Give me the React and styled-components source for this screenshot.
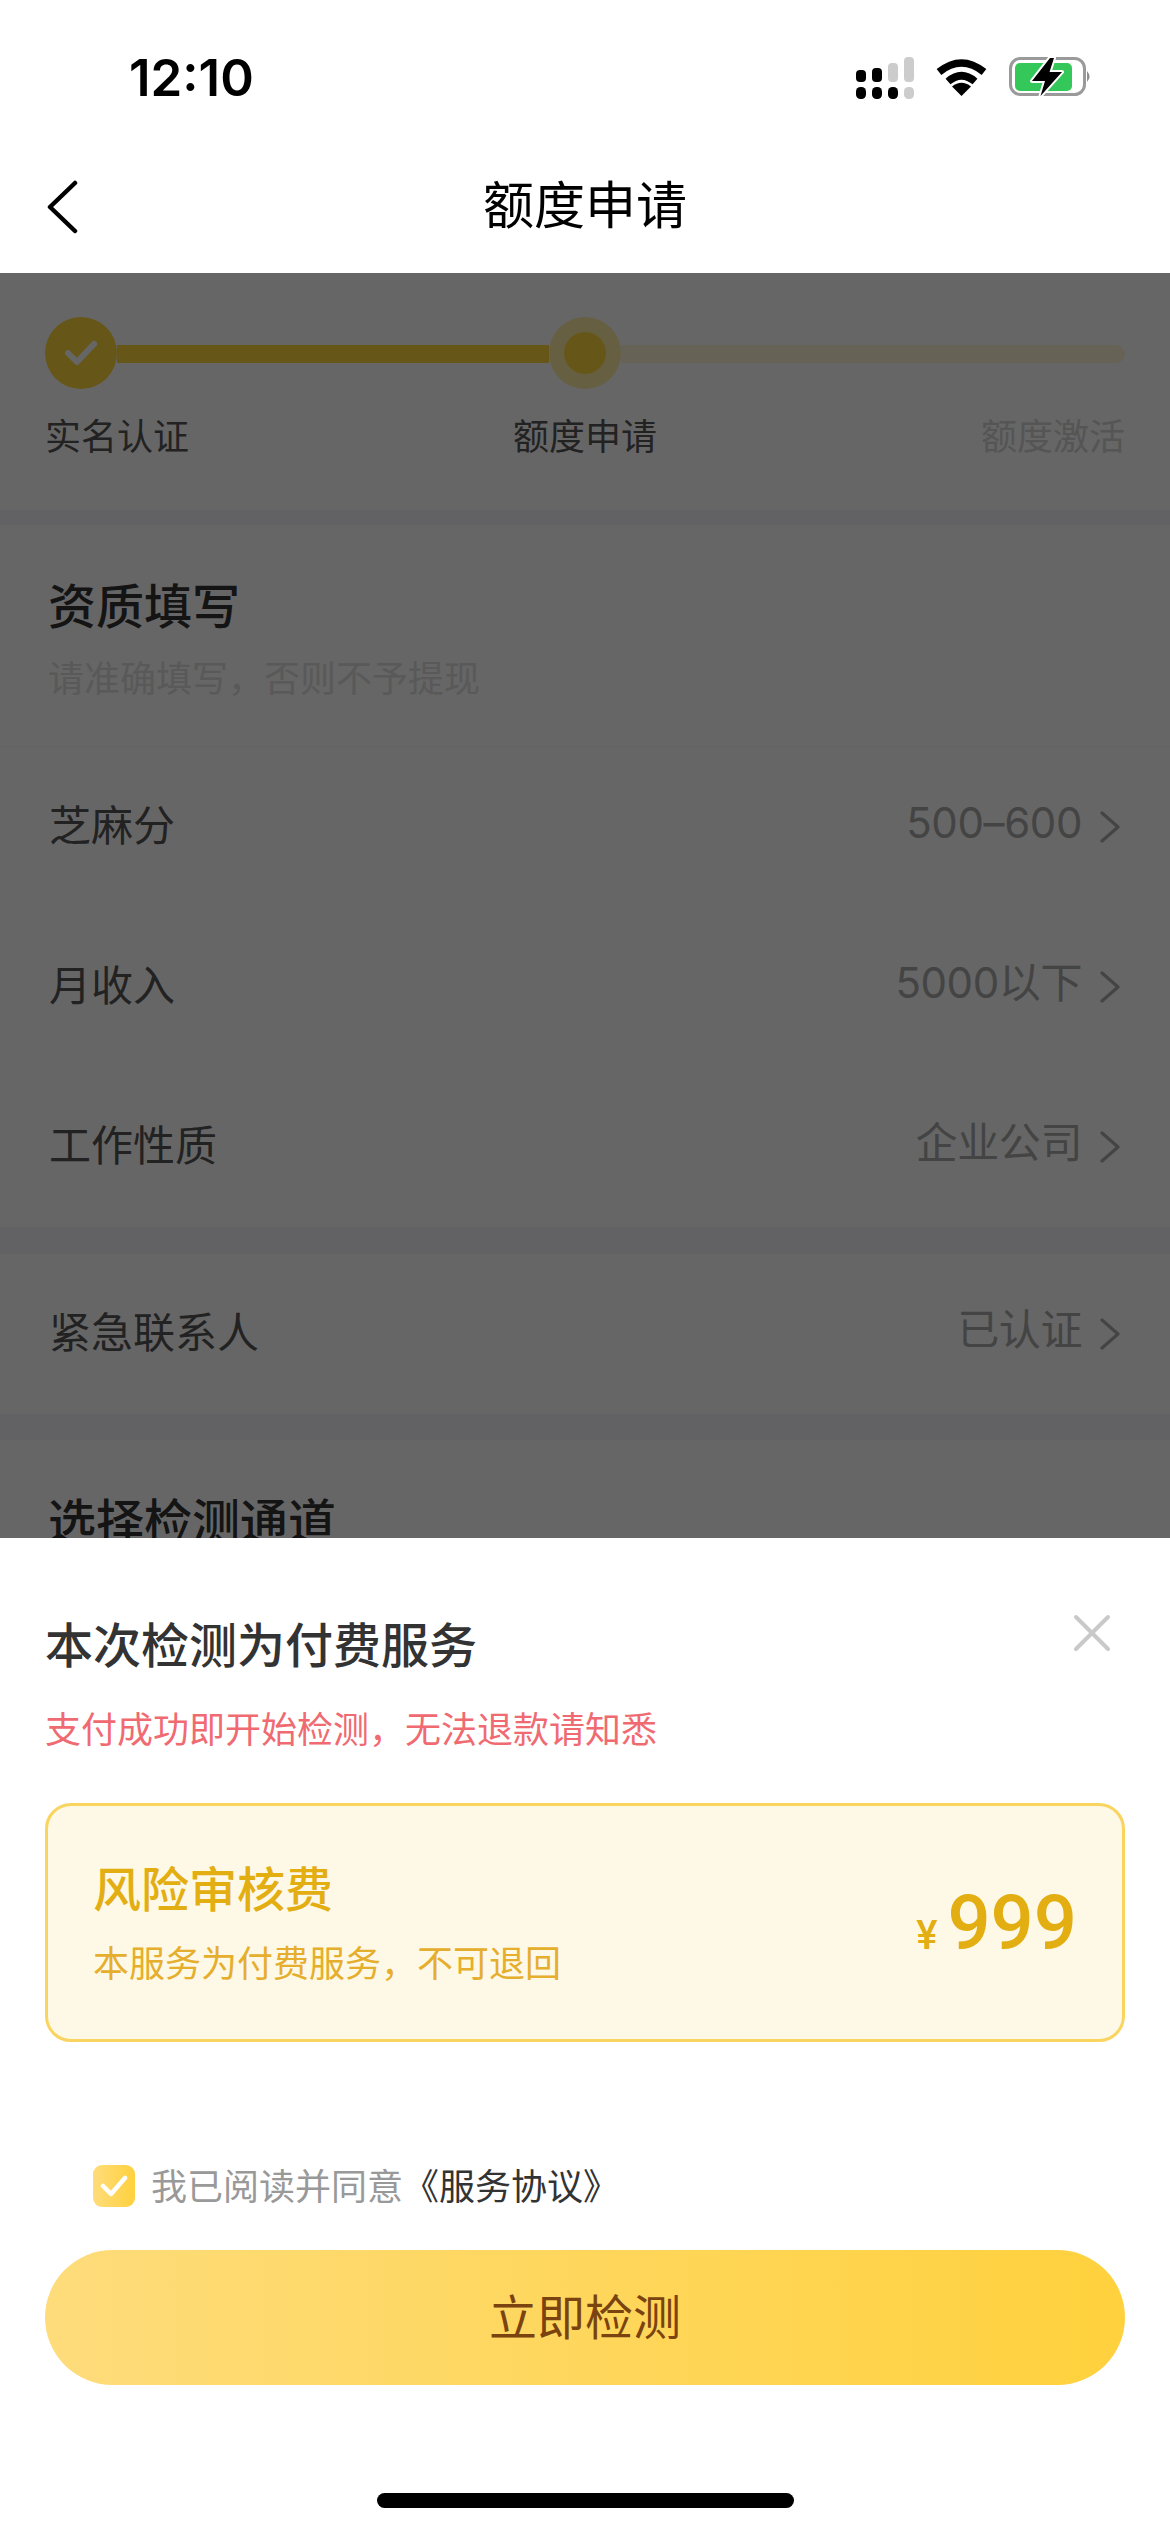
import React from "react";
import styled, { createGlobalStyle } from "styled-components";

const FONT = `"Noto Sans CJK SC", "Liberation Sans", sans-serif`;

const GlobalStyle = createGlobalStyle`
  html, body {
    margin: 0;
    padding: 0;
    background: #fff;
  }
  * {
    box-sizing: border-box;
  }
`;

const Screen = styled.div`
  position: relative;
  width: 1170px;
  height: 2532px;
  overflow: hidden;
  background: #fff;
  font-family: ${FONT};
`;

const StatusBar = styled.div`
  height: 136px;
  padding: 57px 78px 0 129px;
  display: flex;
  justify-content: space-between;
  align-items: flex-start;
`;

const Time = styled.div`
  font-family: Inter, "Liberation Sans", sans-serif;
  font-size: 51px;
  font-weight: 600;
  line-height: 42px;
  color: #000;
`;

const StatusIcons = styled.div`
  display: flex;
  align-items: flex-start;
  gap: 22px;
`;

const NavBar = styled.div`
  position: relative;
  height: 137px;
  padding-bottom: 5px;
  display: flex;
  align-items: center;
  justify-content: center;
`;

const BackIcon = styled.svg`
  position: absolute;
  left: 46px;
  top: 44px;
`;

const NavTitle = styled.div`
  font-size: 51px;
  line-height: 60px;
  color: #000;
`;

const Stepper = styled.section`
  height: 237px;
  padding: 44px 45px 0;
  background: #fff;
`;

const Track = styled.div`
  display: flex;
  align-items: center;
`;

const DoneDot = styled.div`
  width: 72px;
  height: 72px;
  flex: none;
  border-radius: 50%;
  background: #ffd83c;
  display: flex;
  align-items: center;
  justify-content: center;
`;

const CurrentDot = styled.div`
  width: 72px;
  height: 72px;
  flex: none;
  border-radius: 50%;
  background: #ffeea6;
  display: flex;
  align-items: center;
  justify-content: center;

  &::after {
    content: "";
    width: 42px;
    height: 42px;
    border-radius: 50%;
    background: #ffd83c;
  }
`;

const Line = styled.div`
  height: 18px;
  margin-top: 2px;
  flex: ${(p) => (p.$done ? "0 0 432px" : "1")};
  background: ${(p) => (p.$done ? "#ffd83c" : "#fff5d6")};
  border-radius: ${(p) => (p.$done ? "0" : "0 9px 9px 0")};
`;

const StepLabels = styled.div`
  margin-top: 20px;
  display: flex;
  justify-content: space-between;
`;

const StepLabel = styled.span`
  font-size: 36px;
  line-height: 50px;
  color: ${(p) => (p.$muted ? "#d4d4d4" : "#555")};
`;

const Band = styled.div`
  height: ${(p) => p.$size}px;
  background: #f6f6fa;
`;

const Section = styled.section`
  padding: 48px 48px 45px;
  background: #fff;
`;

const SectionTitle = styled.h2`
  margin: 0;
  font-size: 48px;
  font-weight: 500;
  line-height: 60px;
  color: #333;
`;

const SectionHint = styled.p`
  margin: 18px 0 0;
  font-size: 36px;
  line-height: 50px;
  color: #dedede;
`;

const Row = styled.div`
  height: 160px;
  padding: 0 50px 8px 49px;
  display: flex;
  align-items: center;
  justify-content: space-between;
  background: #fff;
`;

const RowLabel = styled.span`
  font-size: 42px;
  line-height: 60px;
  color: #555;
`;

const RowValue = styled.span`
  display: flex;
  align-items: center;
  gap: 18px;
  font-family: Inter, ${FONT};
  font-size: 42px;
  line-height: 60px;
  letter-spacing: -0.4px;
  color: #aaa;
`;

const ChevronIcon = styled.svg`
  margin-top: 8px;
`;

const Overlay = styled.div`
  position: absolute;
  top: 273px;
  left: 0;
  right: 0;
  bottom: 0;
  background: rgba(0, 0, 0, 0.6);
`;

const Sheet = styled.div`
  position: absolute;
  left: 0;
  right: 0;
  bottom: 0;
  height: 994px;
  padding: 74px 45px 0;
  background: #fff;
`;

const CloseIcon = styled.svg`
  position: absolute;
  top: 76px;
  right: 59px;
`;

const SheetTitle = styled.h3`
  margin: 0;
  font-size: 48px;
  font-weight: 500;
  line-height: 60px;
  color: #333;
`;

const SheetNote = styled.p`
  margin: 30px 0 0;
  font-size: 36px;
  line-height: 50px;
  color: #f06a72;
`;

const PriceCard = styled.div`
  margin-top: 51px;
  height: 239px;
  padding: 0 45px;
  display: flex;
  align-items: center;
  justify-content: space-between;
  background: #fef9e7;
  border: 3px solid #f9d45f;
  border-radius: 26px;
`;

const CardText = styled.div`
  margin-bottom: 4px;
`;

const CardTitle = styled.div`
  font-size: 48px;
  font-weight: 500;
  line-height: 60px;
  color: #e3ae12;
`;

const CardHint = styled.div`
  margin-top: 20px;
  font-size: 36px;
  line-height: 50px;
  color: #e5ae2c;
`;

const Price = styled.div`
  display: flex;
  align-items: baseline;
  gap: 10px;
  font-family: Roboto, "Liberation Sans", sans-serif;
  font-weight: 500;
  color: #e3ae12;
`;

const Currency = styled.span`
  font-size: 40px;
`;

const Amount = styled.span`
  font-size: 76px;
  line-height: 80px;
`;

const Agreement = styled.div`
  margin: 117px 0 0 48px;
  display: flex;
  align-items: center;
  gap: 16px;
  font-size: 36px;
  line-height: 50px;
  color: #999;
`;

const CheckBox = styled.div`
  width: 42px;
  height: 42px;
  margin-top: 3px;
  border-radius: 9px;
  background: linear-gradient(90deg, #fedc7b, #ffd13d);
  display: flex;
  align-items: center;
  justify-content: center;
`;

const AgreementLink = styled.span`
  color: #333;
`;

const SubmitButton = styled.button`
  display: block;
  width: 100%;
  height: 135px;
  margin-top: 41px;
  padding: 0 0 7px;
  border: 0;
  border-radius: 68px;
  background: linear-gradient(90deg, #fedc7b, #ffd13d);
  font-family: ${FONT};
  font-size: 48px;
  color: #7a4310;
`;

const HomeBar = styled.div`
  width: 417px;
  height: 15px;
  margin: 108px auto 0;
  border-radius: 8px;
  background: #000;
`;

const SignalIcon = () => (
  <svg width="58" height="42" viewBox="0 0 58 42">
    <rect x="0" y="13" width="10" height="12" rx="4" fill="#000" />
    <rect x="16" y="11" width="10" height="14" rx="4" fill="#000" />
    <rect x="32" y="6" width="10" height="19" rx="4" fill="#ccc" />
    <rect x="48" y="0" width="10" height="25" rx="4" fill="#ccc" />
    <rect x="0" y="30" width="10" height="12" rx="4.5" fill="#000" />
    <rect x="16" y="30" width="10" height="12" rx="4.5" fill="#000" />
    <rect x="32" y="30" width="10" height="12" rx="4.5" fill="#000" />
    <rect x="48" y="30" width="10" height="12" rx="4.5" fill="#ccc" />
  </svg>
);

const WifiIcon = () => (
  <svg width="51" height="37" viewBox="0 0 51 37" style={{ marginTop: 2 }}>
    <path d="M3 13 Q25.5 -5 48 13" fill="none" stroke="#000" strokeWidth="7.5" />
    <path d="M12 22.5 Q25.5 11 39 22.5" fill="none" stroke="#000" strokeWidth="7.5" />
    <path d="M25.5 37 L16 27.5 Q25.5 20 35 27.5 Z" fill="#000" />
  </svg>
);

const BatteryIcon = () => (
  <svg width="83" height="40" viewBox="0 0 83 40" style={{ marginTop: 0 }}>
    <rect x="1.5" y="1.5" width="74" height="36" rx="10" fill="none" stroke="#9a9a9a" strokeWidth="3" />
    <rect x="6" y="6" width="57" height="28" rx="5" fill="#34c759" />
    <path d="M78 14 Q83 19.5 78 25 Z" fill="#8e8e8e" />
    <path
      d="M41 1 L23 24 H36 L31.5 39 L53 15 H40.5 L45 1 Z"
      fill="#000"
      stroke="#fff"
      strokeWidth="4"
      strokeLinejoin="round"
      paintOrder="stroke"
    />
  </svg>
);

const Chevron = () => (
  <ChevronIcon width="20" height="32" viewBox="0 0 20 32">
    <path d="M2 2 L18 16 L2 30" fill="none" stroke="#aaa" strokeWidth="3.2" strokeLinecap="round" strokeLinejoin="round" />
  </ChevronIcon>
);

const rows = [
  { label: "芝麻分", value: "500–600" },
  { label: "月收入", value: "5000以下" },
  { label: "工作性质", value: "企业公司" },
];

const InfoRow = ({ label, value }) => (
  <Row>
    <RowLabel>{label}</RowLabel>
    <RowValue>
      {value}
      <Chevron />
    </RowValue>
  </Row>
);

const App = () => {
  return (
    <>
      <GlobalStyle />
      <Screen>
        <StatusBar>
          <Time>12:10</Time>
          <StatusIcons>
            <SignalIcon />
            <WifiIcon />
            <BatteryIcon />
          </StatusIcons>
        </StatusBar>
        <NavBar>
          <BackIcon width="34" height="54" viewBox="0 0 34 54">
            <path d="M29 3 L4 27 L29 51" fill="none" stroke="#000" strokeWidth="4.5" strokeLinecap="round" strokeLinejoin="round" />
          </BackIcon>
          <NavTitle>额度申请</NavTitle>
        </NavBar>

        <Stepper>
          <Track>
            <DoneDot>
              <svg width="34" height="28" viewBox="0 0 34 28">
                <path d="M4 14 L13 23 L30 5" fill="none" stroke="#fff" strokeWidth="6" strokeLinecap="round" strokeLinejoin="round" />
              </svg>
            </DoneDot>
            <Line $done />
            <CurrentDot />
            <Line />
          </Track>
          <StepLabels>
            <StepLabel>实名认证</StepLabel>
            <StepLabel>额度申请</StepLabel>
            <StepLabel $muted>额度激活</StepLabel>
          </StepLabels>
        </Stepper>
        <Band $size={15} />

        <Section>
          <SectionTitle>资质填写</SectionTitle>
          <SectionHint>{"请准确填写\uFF0C否则不予提现"}</SectionHint>
        </Section>
        <Band $size={1} />
        {rows.map((row) => (
          <InfoRow key={row.label} {...row} />
        ))}
        <Band $size={27} />
        <InfoRow label="紧急联系人" value="已认证" />
        <Band $size={26} />
        <Section>
          <SectionTitle>选择检测通道</SectionTitle>
        </Section>

        <Overlay />

        <Sheet>
          <CloseIcon width="38" height="38" viewBox="0 0 38 38">
            <path d="M3 3 L35 35 M35 3 L3 35" fill="none" stroke="#c9c9c9" strokeWidth="4" strokeLinecap="round" />
          </CloseIcon>
          <SheetTitle>本次检测为付费服务</SheetTitle>
          <SheetNote>{"支付成功即开始检测\uFF0C无法退款请知悉"}</SheetNote>
          <PriceCard>
            <CardText>
              <CardTitle>风险审核费</CardTitle>
              <CardHint>{"本服务为付费服务\uFF0C不可退回"}</CardHint>
            </CardText>
            <Price>
              <Currency>¥</Currency>
              <Amount>999</Amount>
            </Price>
          </PriceCard>
          <Agreement>
            <CheckBox>
              <svg width="28" height="24" viewBox="0 0 28 24">
                <path d="M3 12 L11 20 L25 4" fill="none" stroke="#fff" strokeWidth="4.5" strokeLinecap="round" strokeLinejoin="round" />
              </svg>
            </CheckBox>
            <span>
              我已阅读并同意<AgreementLink>《服务协议》</AgreementLink>
            </span>
          </Agreement>
          <SubmitButton>立即检测</SubmitButton>
          <HomeBar />
        </Sheet>
      </Screen>
    </>
  );
};

export default App;
